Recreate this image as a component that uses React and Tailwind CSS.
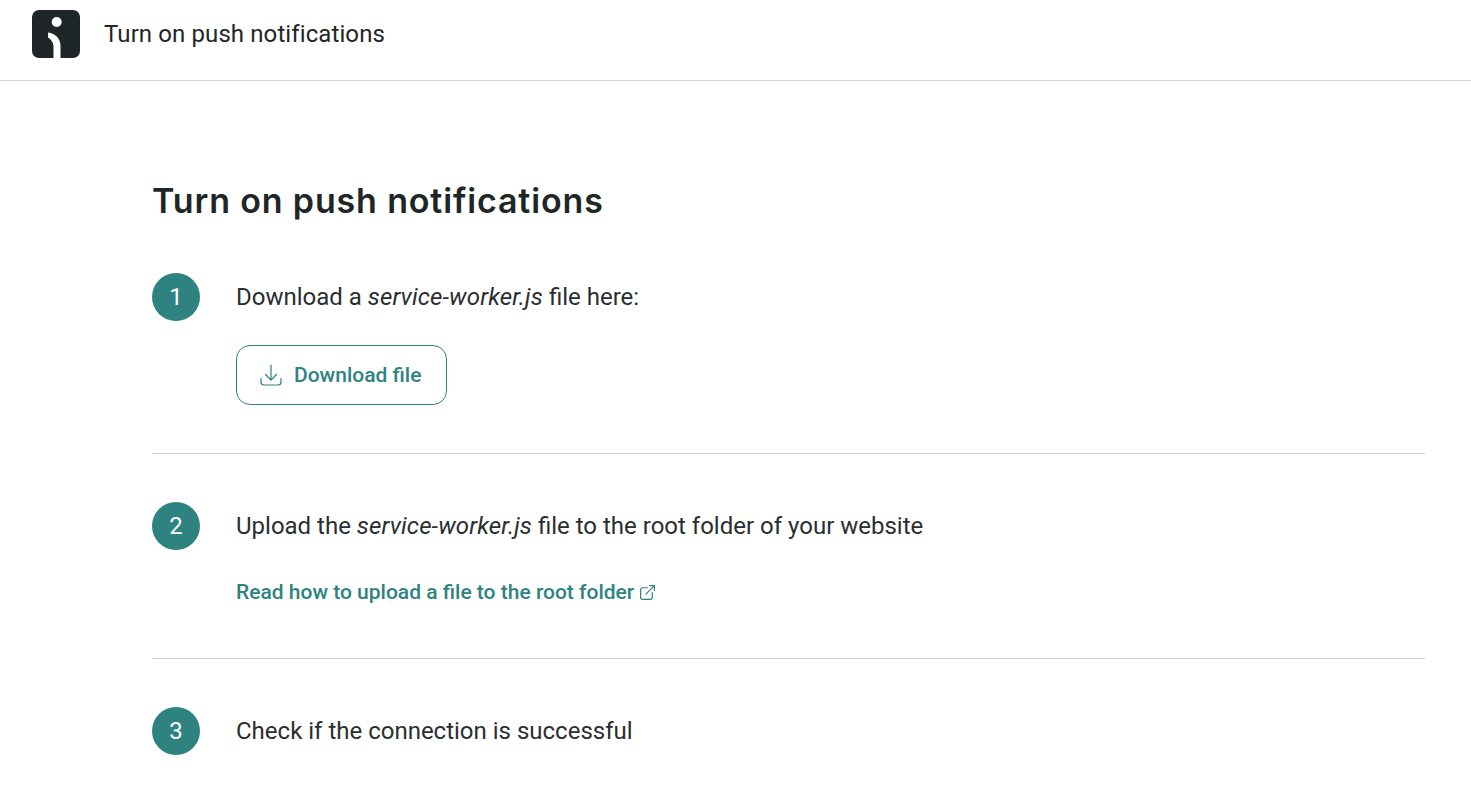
const Logo = () => (
  <svg width="48" height="48" viewBox="0 0 48 48" className="block">
    <rect width="48" height="48" rx="7" fill="#1f2627" />
    <circle cx="24.700" cy="12" r="5" fill="#fff" />
    <path d="M16 22.500c7.500 1 12.500 6 12.500 13.500v12h-7V37c0-4-2-7.500-5.500-9.500z" fill="#fff" />
  </svg>
);

const DownloadIcon = () => (
  <svg width="24" height="24" viewBox="0 0 24 24" fill="none" stroke="#2e8380" strokeWidth="1.2" strokeLinecap="round" strokeLinejoin="round">
    <path d="M12 2v15M6.500 11.500l5.500 5.500 5.500-5.500" />
    <path d="M2 15.500v3.500A3 3 0 0 0 5 22h14a3 3 0 0 0 3-3v-3.500" />
  </svg>
);

const ExternalIcon = () => (
  <svg width="17" height="17" viewBox="0 0 16 16" fill="none" stroke="#2e8380" strokeWidth="1.1" strokeLinecap="round" strokeLinejoin="round">
    <path d="M8 3.500H3.500A2 2 0 0 0 1.500 5.500v7a2 2 0 0 0 2 2h7a2 2 0 0 0 2-2V8" />
    <path d="M6.500 9.500l8-8M10 1.500h4.500V6" />
  </svg>
);

const Step = ({ n, children }) => (
  <div className="flex items-center gap-9">
    <div className="w-12 h-12 rounded-full bg-[#2e8380] text-white flex items-center justify-center text-[24px] shrink-0">{n}</div>
    <div className="text-[24px] leading-[32px] text-[#2a2e2f]">{children}</div>
  </div>
);

const Italic = ({ children }) => <em className="tracking-[0.12px]">{children}</em>;

export default function App() {
  return (
    <div className="min-h-[798px] bg-white font-['Roboto',sans-serif] overflow-hidden">
      <header className="h-[81px] border-b border-[#d3d9d8] flex items-start pl-8 pt-[10px] gap-6">
        <Logo />
        <span className="text-[24px] leading-[32px] mt-[8px] tracking-[0.1px] text-[#1f2627]">Turn on push notifications</span>
      </header>

      <main className="pl-[152px] pr-[46px]">
        <h1 className="mt-[97px] text-[34px] leading-[46px] font-semibold tracking-[0.85px] text-[#1f2627] font-['Inter',sans-serif]">Turn on push notifications</h1>

        <section className="mt-[49px] pb-12 border-b border-[#d3d3d3]">
          <Step n={1}>Download a <Italic>service-worker.js</Italic> file here:</Step>
          <button className="mt-6 ml-[84px] w-[211px] h-[60px] rounded-[14px] border border-[#2e8380] flex items-center pl-[22px] gap-[11px] text-[21px] leading-[26px] font-medium text-[#2e8380]">
            <DownloadIcon />
            Download file
          </button>
        </section>

        <section className="pt-12 pb-[50px] border-b border-[#d3d3d3]">
          <Step n={2}>Upload the <Italic>service-worker.js</Italic> file to the root folder of your website</Step>
          <a className="mt-[26px] ml-[84px] flex items-center gap-[5px] text-[21px] leading-[32px] font-medium text-[#2e8380]">
            Read how to upload a file to the root folder
            <ExternalIcon />
          </a>
        </section>

        <section className="pt-12">
          <Step n={3}>Check if the connection is successful</Step>
        </section>
      </main>
    </div>
  );
}
